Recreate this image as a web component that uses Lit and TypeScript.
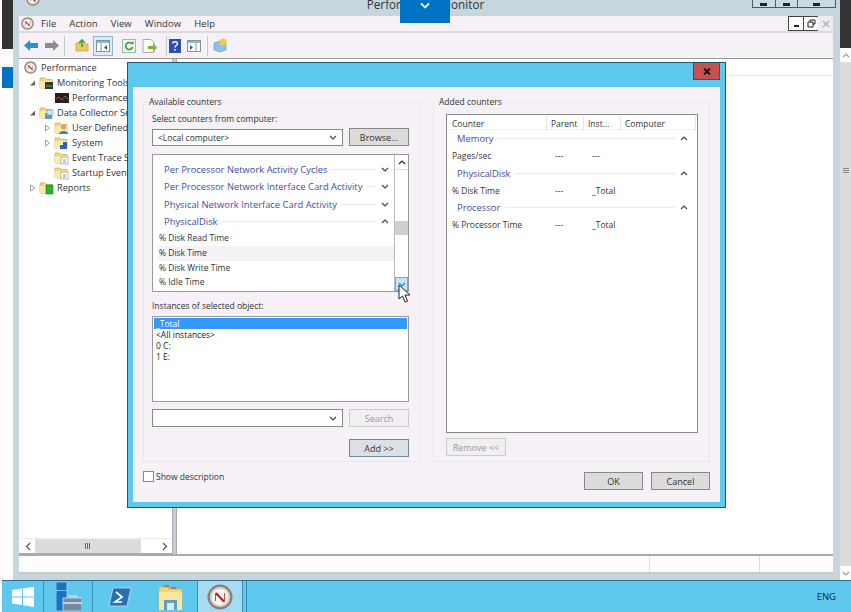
import { LitElement, html, css, svg } from "lit";
import { customElement } from "lit/decorators.js";

const chev = (up: boolean, color = "#444") => html`<svg class="chev" width="8" height="5" viewBox="0 0 8 5"><path d="${up ? "M1 4L4 1L7 4" : "M1 1L4 4L7 1"}" fill="none" stroke="${color}" stroke-width="1.200"/></svg>`;
const perf = (s: number) => html`<svg width="${s}" height="${s}" viewBox="0 0 16 16"><circle cx="8" cy="8" r="7" fill="#d8d0c8" stroke="#8a8078" stroke-width="1.400"/><circle cx="8" cy="8" r="5" fill="#fbf8f4"/><path d="M5.200 10.500V6L10.800 10.500V5.500" fill="none" stroke="#c0504a" stroke-width=".7"/><path d="M5.500 5.500L10.500 11" stroke="#b8232d" stroke-width="1.300"/></svg>`;
const folder = (badge: string) => html`<svg width="15" height="14" viewBox="0 0 15 14"><path d="M1 2h5l1 1.500h6V12H1z" fill="#f4d77c" stroke="#c9a94f" stroke-width=".7"/><path d="M1 5h12v7H1z" fill="#fbe9a9"/>${badge === "mon" ? svg`<rect x="6" y="6" width="8" height="7" fill="#2d3a2c"/><path d="M7 10h6" stroke="#7d7" stroke-width=".8"/>` : badge === "dc" ? svg`<rect x="6" y="7" width="7" height="6" fill="#5b9bd5"/><rect x="8" y="4" width="6" height="5" fill="#cfe3f3" stroke="#6b9cc5" stroke-width=".5"/>` : badge === "user" ? svg`<circle cx="9.500" cy="6" r="2.600" fill="#d9a76b"/><path d="M5 13c0-4 9-4 9 0z" fill="#4a78b8"/>` : badge === "sys" ? svg`<rect x="6" y="6" width="7" height="7" fill="#2f62b5"/><rect x="6" y="6" width="3" height="3" fill="#fff"/>` : badge === "rep" ? svg`<rect x="7" y="4" width="7" height="9" fill="#2fb32f" stroke="#187a18" stroke-width=".6"/>` : svg`<rect x="7" y="6" width="7" height="7" fill="#fff" stroke="#8a9aa5" stroke-width=".7"/><path d="M9 9h3M9 11h3" stroke="#666" stroke-width=".7"/>`}</svg>`;
const tri = (open: boolean) => html`<svg class="tri" width="7" height="8" viewBox="0 0 7 8">${open ? svg`<path d="M6 1.500V6.500H1z" fill="#666"/>` : svg`<path d="M1.500 1L5.500 4L1.500 7z" fill="#fff" stroke="#888" stroke-width=".8"/>`}</svg>`;

@customElement("counter-group")
class CounterGroup extends LitElement {
  static properties = { label: {}, open: { type: Boolean } };
  declare label: string;
  declare open: boolean;
  static styles = css`
    :host { display: flex; align-items: center; height: 17.3px; }
    .t { color: #3d4ea3; font-size: 9.4px; white-space: nowrap; }
    .l { flex: 1; height: 1px; background: #ececec; margin: 0 5px 0 4px; }
    .c { width: 13px; display: flex; }
  `;
  render() {
    return html`<span class="t">${this.label}</span><span class="l"></span><span class="c">${chev(this.open)}</span>`;
  }
}

@customElement("app-root")
class AppRoot extends LitElement {
  static styles = css`
    :host { display: block; width: 851px; height: 612px; font-family: "Open Sans", "Noto Sans", sans-serif; font-size: 8.5px; color: #222; }
    * { box-sizing: border-box; }
    .desk { position: relative; width: 851px; height: 612px; overflow: hidden; background: #fff; display: grid; grid-template-columns: 13px 827px 11px; grid-template-rows: 580px 32px; }
    .lstrip { padding-left: 2px; display: flex; flex-direction: column; }
    .dark { height: 49px; background: #333; flex: none; }
    .lgap { height: 18px; flex: none; }
    .lblue { height: 21px; background: #0072c6; flex: none; }
    .rstrip { display: flex; flex-direction: column; }
    .rdark { height: 48px; background: #333; flex: none; }
    .rbtn { height: 14px; display: flex; align-items: center; justify-content: center; background: #fff; flex: none; }
    .rtrack { flex: 1; background: #dcdcdc; display: flex; flex-direction: column; align-items: center; padding-top: 106px; }
    .grip { width: 6px; height: 6px; background: repeating-linear-gradient(#888 0 1px, transparent 1px 2px); }

    .win { background: #c5d6de; display: flex; flex-direction: column; padding: 0 7px 6px 6px; }
    .title { height: 16px; flex: none; display: flex; align-items: flex-start; padding-left: 7px; }
    .ttext { flex: 1; text-align: center; font-size: 11.700px; line-height: 9px; color: #333; padding-left: 59px; white-space: nowrap; }
    .ticon { margin-top: -8px; }
    .wbtns { display: flex; height: 8px; border: 1px solid #555; border-top: 0; width: 84px; margin-right: -3px; background: #ccdbe2; flex: none; }
    .wbtns span { flex: 1; border-left: 1px solid #555; display: flex; justify-content: center; align-items: flex-end; padding-bottom: 1px; }
    .wbtns span:first-child { border-left: 0; }
    .wbtns span:last-child { flex: 1.700; }
    .wbtns i { display: block; width: 7px; height: 3px; background: #222; }
    .menu { height: 17px; flex: none; background: #f5f1f6; border-bottom: 2px solid #dddadd; display: flex; align-items: center; font-size: 9.500px; letter-spacing: .08px; color: #333; }
    .menu .mi { margin-left: 2px; display: flex; }
    .menu b { font-weight: 400; margin-left: 13px; }
    .menu b:first-of-type { margin-left: 7px; }
    .mdi { margin-left: auto; display: flex; height: 15px; }
    .mdi span { width: 16px; display: flex; align-items: center; justify-content: center; border: 1px solid #444; background: #fff; margin-left: -1px; }
    .mdi span.off { border: 0; width: 15px; background: #ececf2; color: #aaa; }
    .tool { height: 25px; flex: none; background: #f5f1f6; display: flex; align-items: center; padding-left: 4px; }
    .ti { display: flex; align-items: center; justify-content: center; height: 20px; flex: none; }
    .sep { width: 1px; height: 20px; background: #c8c8c8; flex: none; }
    .sel { background: #dcecf5; border: 1px solid #8fb6cc; }
    .m3 { margin-left: 3px; } .m4 { margin-left: 4px; } .m5 { margin-left: 5px; } .m6 { margin-left: 6px; } .m8 { margin-left: 8px; } .m9 { margin-left: 9px; } .m1 { margin-left: 1px; }
    .w13 { width: 13px; } .w15 { width: 15px; } .w16 { width: 16px; } .w19 { width: 19px; } .w20 { width: 20px; }
    .panes { flex: 1; display: flex; background: #c5ced4; border-top: 1px solid #999; gap: 3px; min-height: 0; }
    .tree { width: 154px; background: #fff; display: flex; flex-direction: column; border-right: 1px solid #aaa; }
    .rows { flex: 1; padding-top: 1px; overflow: hidden; }
    .row { height: 15px; display: flex; align-items: center; gap: 3px; white-space: nowrap; font-size: 9.200px; color: #333; }
    .r0 { padding-left: 5px; gap: 4px; } .r1 { padding-left: 10px; } .r2 { padding-left: 25px; } .r3 { padding-left: 35px; } .r4 { padding-left: 36px; }
    .tri { flex: none; }
    .hs { height: 16px; display: flex; align-items: center; background: #fff; border-top: 1px solid #eee; padding-left: 2px; border-bottom: 1px solid #aaa; }
    .ab { width: 14px; display: flex; justify-content: center; }
    .hthumb { width: 106px; height: 14px; background: #dcdcdc; display: flex; align-items: center; justify-content: center; }
    .hfill { flex: 1; }
    .vg { width: 6px; height: 6px; background: repeating-linear-gradient(90deg, #666 0 1px, transparent 1px 2px); }
    .main { flex: 1; background: #fff; border-left: 1px solid #aaa; padding-top: 16px; }
    .main div { height: 1px; background: #e6e6e6; }
    .status { height: 20px; flex: none; background: #fff; border-top: 2px solid #aaa; border-bottom: 2px solid #c8c8c8; display: grid; grid-template-columns: 631px 110px 1fr; }
    .status span { border-right: 1px solid #ddd; }
    .status span:last-child { border: 0; }

    .task { grid-column: 1 / 4; background: #5fc8ee; border-top: 1px solid #3a6a80; margin-left: 2px; display: flex; align-items: stretch; }
    .tb { display: flex; align-items: center; justify-content: center; border-right: 1px solid #3a8fb0; flex: none; }
    .t1 { width: 42px; } .t2 { width: 49px; padding-left: 2px; } .t3 { width: 105px; gap: 26px; } .t4 { width: 45px; background: #a6dcf3; } .t5 { width: 4px; }
    .eng { margin-left: auto; align-self: center; margin-right: 15px; font-size: 9.500px; color: #123; }
    .tab { position: absolute; left: 400px; top: 0; width: 50px; height: 23px; background: #0072c6; display: flex; justify-content: center; padding-top: 2px; }

    .dlg { position: absolute; left: 127px; top: 62px; width: 599px; height: 446px; background: #5ec9ef; border: 1px solid #22576b; padding: 24px 5px 5px 5px; }
    .x { position: absolute; right: 5px; top: 0; width: 27px; height: 17px; background: #c75050; border: 1px solid #7a3a3a; border-top: 0; display: flex; align-items: center; justify-content: center; }
    .body { height: 100%; background: #f5f1f6; padding: 9px 9px 0 10px; position: relative; display: flex; flex-direction: column; }
    .groups { display: grid; grid-template-columns: 277px 277px; gap: 13px; height: 366px; flex: none; }
    fieldset { margin: 0; padding: 0 10px 0 8px; border: 1px solid #e9e7ea; min-width: 0; display: block; height: 366px; }
    legend { padding: 0; margin-left: -3px; line-height: 12px; height: 12px; color: #333; }
    .lab { line-height: 11px; height: 11px; margin-top: 5px; color: #333; }
    .lab2 { margin-top: 8px; }
    .line { display: grid; grid-template-columns: 191px 60px; column-gap: 6px; align-items: center; margin-top: 4px; }
    .combo { height: 17px; border: 1px solid #888; background: #fff; display: flex; align-items: center; justify-content: space-between; padding: 0 5px; color: #333; }
    .tall { height: 18px; }
    .btn { height: 18px; border: 1px solid #888; background: #dcdcdc; display: flex; align-items: center; justify-content: center; color: #333; font-size: 9px; flex: none; }
    .btn.dis { background: #f1eff2; border-color: #ccc; color: #999; }
    .btn.def { background: #dce0e4; border-color: #6f8a9a; }
    .list { margin-top: 8px; height: 138px; border: 1px solid #999; background: #fff; display: flex; overflow: hidden; }
    .items { flex: 1; min-width: 0; padding: 6px 0 0 5px; overflow: hidden; }
    .groupsp { padding-left: 6px; margin-bottom: 1px; }
    .it { height: 14.700px; line-height: 14px; padding-left: 1px; color: #333; }
    .it.hov { background: #f5f1f5; }
    .vs { width: 14px; flex: none; display: flex; flex-direction: column; border-left: 1px solid #bbb; }
    .up { height: 15px; display: flex; align-items: center; justify-content: center; border-bottom: 1px solid #ddd; }
    .sp1 { height: 51px; }
    .thumb { height: 14px; background: #cfcfcf; }
    .sp2 { flex: 1; }
    .dn { height: 14px; background: #bfe6f7; border: 1px solid #54b7e6; display: flex; align-items: center; justify-content: center; }
    .inst { margin-top: 5px; height: 86px; border: 1px solid #999; background: #fff; padding: 1px; color: #222; line-height: 11px; }
    .inst div { height: 11px; padding-left: 2px; }
    .inst .s { background: #3399ff; color: #fff; }
    .gap7 { margin-top: 7px; }
    .addrow { margin-top: 12px; display: flex; justify-content: flex-end; }
    .w60 { width: 60px; }
    .added { margin-top: 6px; margin-left: 4px; width: 252px; height: 319px; border: 1px solid #888; background: #fff; padding: 1px; }
    .hd { display: grid; grid-template-columns: 99px 37px 37px 75px; height: 14px; border-bottom: 1px solid #f0f0f0; line-height: 15px; color: #333; }
    .hd span { border-right: 1px solid #e5e5e5; padding-left: 4px; }
    .agrp { padding-left: 9px; padding-right: 3px; }
    .arow { display: grid; grid-template-columns: 99px 37px 37px 75px; height: 17.300px; line-height: 18px; padding-left: 4px; color: #333; }
    .arow span + span { padding-left: 4px; }
    .rm { margin-top: 5px; margin-left: 4px; width: 60px; }
    .foot { display: flex; align-items: flex-start; margin-top: 9px; }
    .cb { width: 11px; height: 11px; border: 1px solid #888; background: #fff; margin-right: 2px; flex: none; }
    .ft { line-height: 10px; margin-top: 1px; color: #333; flex: 1; }
    .ok { width: 59px; margin-top: 1px; }
    .cancel { width: 59px; margin: 1px 1px 0 8px; }
    .cursor { position: absolute; left: 398px; top: 284px; }
  `;

  render() {
    return html`<div class="desk">
      <div class="lstrip"><div class="dark"></div><div class="lgap"></div><div class="lblue"></div></div>
      <div class="win">
        <div class="title"><span class="ticon">${perf(14)}</span><span class="ttext">Performance Monitor</span><div class="wbtns"><span><i></i></span><span><i></i></span><span><i></i></span></div></div>
        <div class="menu"><span class="mi">${perf(13)}</span><b>File</b><b>Action</b><b>View</b><b>Window</b><b>Help</b>
          <div class="mdi"><span><svg width="7" height="7"><rect x="1" y="5" width="5" height="2" fill="#222"/></svg></span><span><svg width="9" height="9" viewBox="0 0 9 9"><path d="M3 3V1h5v4H6M1 3h5v5H1z" fill="none" stroke="#222"/></svg></span><span class="off"><svg width="8" height="8" viewBox="0 0 8 8"><path d="M1 1L7 7M7 1L1 7" stroke="#b5b5c0" stroke-width="1.600"/></svg></span></div></div>
        <div class="tool">
          <span class="ti w15"><svg width="14" height="11"><path d="M0 5.500L6 0V3H14V8H6V11z" fill="#2b8fd6"/></svg></span>
          <span class="ti w19 m4"><svg width="14" height="11"><path d="M14 5.500L8 0V3H0V8H8V11z" fill="#8c8c8c"/></svg></span>
          <span class="sep m3"></span>
          <span class="ti w16 m9"><svg width="14" height="13"><path d="M1 4h5l1 1h6v7H1z" fill="#eec95f" stroke="#b8953a" stroke-width=".6"/><path d="M7 8V2M4 4l3-3 3 3" stroke="#3aa03a" stroke-width="1.600" fill="none"/></svg></span>
          <span class="ti sel w20 m3"><svg width="14" height="12"><rect x=".5" y=".5" width="13" height="11" fill="#fff" stroke="#7a9a90"/><rect x="1" y="1" width="12" height="2" fill="#8bb8d8"/><path d="M5 3v8" stroke="#7a9a90"/><path d="M11 5L8 7.500L11 10z" fill="#556"/></svg></span>
          <span class="ti w16 m8"><svg width="14" height="14"><rect x=".5" y=".5" width="13" height="13" fill="#eef5e8" stroke="#9bb"/><path d="M10 5a3.500 3.500 0 1 0 .5 3" fill="none" stroke="#3a9a3a" stroke-width="1.600"/><path d="M8 5h3.500V2z" fill="#3a9a3a"/></svg></span>
          <span class="ti w16 m4"><svg width="15" height="14"><path d="M1 .5h8l3 3v10H1z" fill="#fdfdf5" stroke="#aaa"/><path d="M6 7h5V4l4 4.500-4 4.500v-3H6z" fill="#7cb82f"/></svg></span>
          <span class="sep m9"></span>
          <span class="ti w13 m1"><svg width="12" height="14"><rect width="12" height="14" fill="#2a4fb0"/><path d="M3.500 4.500C3.500 2 8.500 2 8.500 4.500C8.500 6.500 6 6.500 6 8.500" fill="none" stroke="#fff" stroke-width="1.500"/><rect x="5.200" y="10" width="1.600" height="1.600" fill="#fff"/></svg></span>
          <span class="ti w15 m5"><svg width="14" height="12"><rect x=".5" y=".5" width="13" height="11" fill="#fff" stroke="#7a9a90"/><rect x="1" y="1" width="12" height="2" fill="#8bb8d8"/><path d="M9 3v8" stroke="#7a9a90"/><path d="M3 5L6 7.500L3 10z" fill="#556"/></svg></span>
          <span class="sep m6"></span>
          <span class="ti w15 m5"><svg width="15" height="15"><path d="M1 5l6-2 6 2v7l-6 2-6-2z" fill="#8cc2e8" stroke="#5a8fb8" stroke-width=".6"/><circle cx="10" cy="4" r="3.500" fill="#f5c84a"/></svg></span>
        </div>
        <div class="panes">
          <div class="tree">
            <div class="rows">
              <div class="row r0">${perf(13)}<span>Performance</span></div>
              <div class="row r1">${tri(true)}${folder("mon")}<span>Monitoring Tools</span></div>
              <div class="row r4"><svg width="14" height="10"><rect width="14" height="10" fill="#222"/><path d="M1 6l3-2 3 3 3-4 3 3" stroke="#c44" fill="none"/></svg><span>Performance Monitor</span></div>
              <div class="row r1">${tri(true)}${folder("dc")}<span>Data Collector Sets</span></div>
              <div class="row r2">${tri(false)}${folder("user")}<span>User Defined</span></div>
              <div class="row r2">${tri(false)}${folder("sys")}<span>System</span></div>
              <div class="row r3">${folder("doc")}<span>Event Trace Sessions</span></div>
              <div class="row r3">${folder("doc")}<span>Startup Event Trace</span></div>
              <div class="row r1">${tri(false)}${folder("rep")}<span>Reports</span></div>
            </div>
            <div class="hs"><span class="ab"><svg width="6" height="9"><path d="M5 1L1.500 4.500L5 8" fill="none" stroke="#555" stroke-width="1.200"/></svg></span><span class="hthumb"><span class="vg"></span></span><span class="hfill"></span><span class="ab"><svg width="6" height="9"><path d="M1 1L4.500 4.500L1 8" fill="none" stroke="#555" stroke-width="1.200"/></svg></span></div>
          </div>
          <div class="main"><div></div></div>
        </div>
        <div class="status"><span></span><span></span><span></span></div>
      </div>
      <div class="rstrip"><div class="rdark"></div><div class="rbtn">${chev(true, "#999")}</div><div class="rtrack"><span class="grip"></span></div><div class="rbtn">${chev(false, "#999")}</div></div>
      <div class="task">
        <div class="tb t1"><svg width="22" height="20" viewBox="0 0 22 20"><path d="M0 3l10-1.500V9.500H0zM11 1.300L22 0V9.500H11zM0 10.500h10V18L0 16.500zM11 10.500H22V20L11 18.300z" fill="#fff"/></svg></div>
        <div class="tb t2"><svg width="26" height="29" viewBox="0 0 26 29"><rect x="0" y="0" width="11" height="8" fill="#1873c4"/><rect x="0" y="9" width="11" height="20" fill="#1873c4" /><path d="M0 0h11v29H0z" fill="none" stroke="#d8f0fa" stroke-width=".6"/><rect x="7" y="16" width="19" height="13" fill="#6f8ba3" stroke="#e5eef3" stroke-width=".7"/><path d="M7 21h19" stroke="#fff" stroke-width="1.200"/><path d="M12 14h9v2" fill="none" stroke="#e5eef3"/></svg></div>
        <div class="tb t3"><svg width="24" height="20" viewBox="0 0 24 20"><path d="M5 1h18l-4 18H1z" fill="#2a6fb0" stroke="#cde" stroke-width=".8"/><path d="M8 5l6 5-7 5h7" fill="none" stroke="#fff" stroke-width="1.700"/></svg><svg width="25" height="26" viewBox="0 0 25 26"><path d="M1 3h8l2 2h13v21H1z" fill="#f4d76e" stroke="#d2ac4a" stroke-width=".7"/><path d="M1 8h23v18H1z" fill="#fbe79c"/><path d="M6 2h5M13 4h5" stroke="#c55" stroke-width="1.500"/><rect x="6" y="16" width="13" height="10" fill="#5a9fd0"/><rect x="9" y="19" width="7" height="7" fill="#d9eef8"/></svg></div>
        <div class="tb t4">${perf(26)}</div>
        <div class="tb t5"></div>
        <span class="eng">ENG</span>
      </div>

      <div class="tab"><svg width="12" height="8" viewBox="0 0 12 8"><path d="M2 1.500L6 5.500L10 1.500" fill="none" stroke="#dff" stroke-width="1.800"/></svg></div>

      <div class="dlg">
        <div class="x"><svg width="8" height="7" viewBox="0 0 8 7"><path d="M1 .5L7 6.500M7 .5L1 6.500" stroke="#111" stroke-width="1.800"/></svg></div>
        <div class="body">
          <div class="groups">
            <fieldset>
              <legend>Available counters</legend>
              <div class="lab">Select counters from computer:</div>
              <div class="line"><div class="combo"><span>&lt;Local computer&gt;</span>${chev(false)}</div><div class="btn">Browse...</div></div>
              <div class="list">
                <div class="items">
                  <div class="groupsp">
                    <counter-group label="Per Processor Network Activity Cycles"></counter-group>
                    <counter-group label="Per Processor Network Interface Card Activity"></counter-group>
                    <counter-group label="Physical Network Interface Card Activity"></counter-group>
                    <counter-group label="PhysicalDisk" open></counter-group>
                  </div>
                  <div class="it">% Disk Read Time</div>
                  <div class="it hov">% Disk Time</div>
                  <div class="it">% Disk Write Time</div>
                  <div class="it">% Idle Time</div>
                </div>
                <div class="vs">
                  <div class="up">${chev(true, "#222")}</div><div class="sp1"></div><div class="thumb"></div><div class="sp2"></div><div class="dn">${chev(false, "#3a7ea6")}</div>
                </div>
              </div>
              <div class="lab lab2">Instances of selected object:</div>
              <div class="inst"><div class="s">_Total</div><div>&lt;All instances&gt;</div><div>0 C:</div><div>1 E:</div></div>
              <div class="line gap7"><div class="combo tall"><span></span>${chev(false)}</div><div class="btn dis">Search</div></div>
              <div class="addrow"><div class="btn def w60">Add &gt;&gt;</div></div>
            </fieldset>
            <fieldset>
              <legend>Added counters</legend>
              <div class="added">
                <div class="hd"><span>Counter</span><span>Parent</span><span>Inst...</span><span>Computer</span></div>
                <div class="agrp"><counter-group label="Memory" open></counter-group></div>
                <div class="arow"><span>Pages/sec</span><span>---</span><span>---</span></div>
                <div class="agrp"><counter-group label="PhysicalDisk" open></counter-group></div>
                <div class="arow"><span>% Disk Time</span><span>---</span><span>_Total</span></div>
                <div class="agrp"><counter-group label="Processor" open></counter-group></div>
                <div class="arow"><span>% Processor Time</span><span>---</span><span>_Total</span></div>
              </div>
              <div class="btn dis rm">Remove &lt;&lt;</div>
            </fieldset>
          </div>
          <div class="foot"><span class="cb"></span><span class="ft">Show description</span><span class="btn ok">OK</span><span class="btn cancel">Cancel</span></div>
        </div>
      </div>
      <svg class="cursor" width="13" height="19" viewBox="0 0 13 19"><path d="M1 1V15L4.500 12L7 18L9.500 17L7 11H12z" fill="#fff" stroke="#222" stroke-width="1"/></svg>
    </div>`;
  }
}
